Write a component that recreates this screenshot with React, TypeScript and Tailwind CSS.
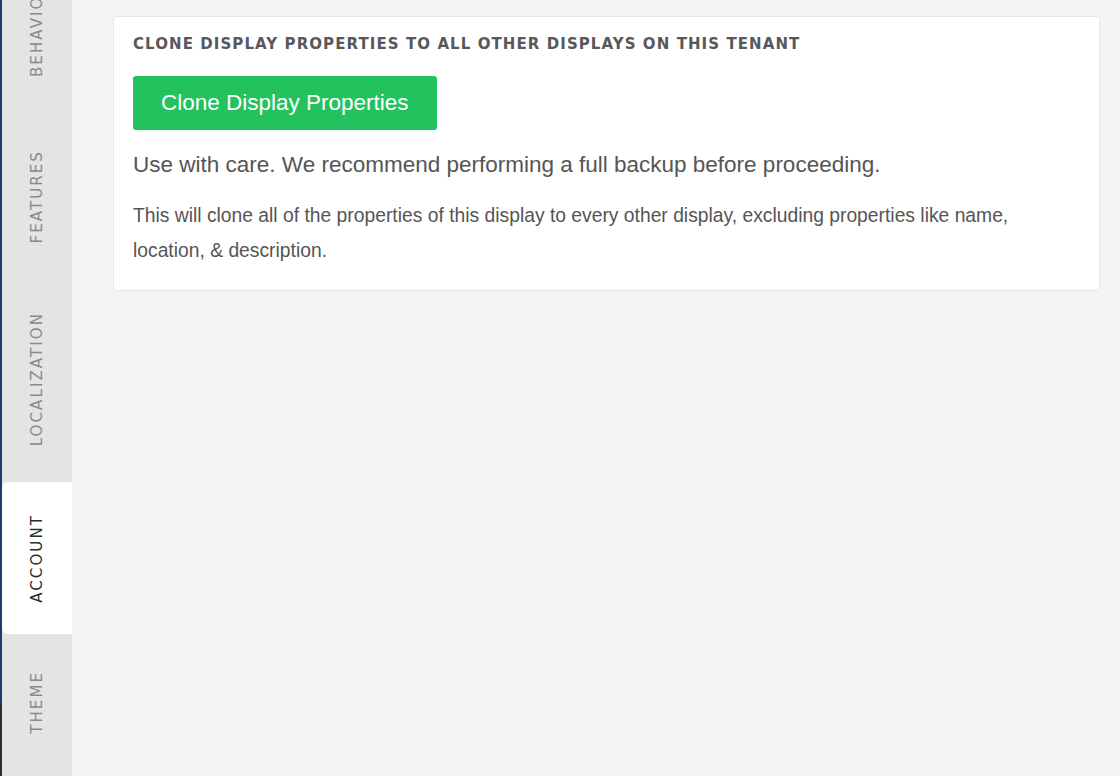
import React from "react";

const tabs = [
  { label: "BEHAVIOR", h: "h-[168px]", active: false },
  { label: "FEATURES", h: "h-[158px]", active: false },
  { label: "LOCALIZATION", h: "h-[198px]", active: false },
  { label: "ACCOUNT", h: "h-[152px]", active: true },
  { label: "THEME", h: "h-[129px]", active: false },
];

export default function App() {
  return (
    <div className="flex h-[776px] w-[1120px] overflow-hidden bg-[#f3f4f6]">
      <div className="flex w-[2px] flex-col">
        <div className="h-[703px] bg-[#1f3a6b]" />
        <div className="flex-1 bg-[#2e2e2e]" />
      </div>
      <div className="w-[70px] bg-[#e4e4e4]">
        <div className="-mt-[54px] flex flex-col gap-1">
          {tabs.map((t) => (
            <div
              key={t.label}
              className={`${t.h} flex items-center justify-center ${
                t.active ? "rounded-l-[6px] bg-white text-[#2d2d2d]" : "text-[#8a8a8a]"
              }`}
            >
              <span className="rotate-180 font-['DejaVu_Sans',sans-serif] text-[15px] font-medium tracking-[0.14em] [writing-mode:vertical-rl]">
                {t.label}
              </span>
            </div>
          ))}
        </div>
      </div>
      <div className="flex-1 pl-[41px] pr-[20px] pt-[16px]">
        <div className="rounded-[3px] border border-[#e6e7ea] bg-white px-[19px] pb-[22px] pt-[17px]">
          <h2 className="font-['DejaVu_Sans',sans-serif] text-[15px] font-semibold tracking-[0.072em] text-[#58585b] leading-[20px]">
            CLONE DISPLAY PROPERTIES TO ALL OTHER DISPLAYS ON THIS TENANT
          </h2>
          <button className="mt-[22px] flex h-[54px] items-center rounded-[3px] bg-[#22c25f] px-[28px] font-['Liberation_Sans',Arial,sans-serif] text-[22.5px] text-white">
            Clone Display Properties
          </button>
          <p className="mt-[20px] font-['Liberation_Sans',Arial,sans-serif] text-[22.5px] leading-[30px] text-[#555]">
            Use with care. We recommend performing a full backup before proceeding.
          </p>
          <p className="mt-[18px] max-w-[910px] font-['Liberation_Sans',Arial,sans-serif] text-[19.3px] leading-[35px] text-[#555]">
            This will clone all of the properties of this display to every other display, excluding properties like name,
            location, &amp; description.
          </p>
        </div>
      </div>
    </div>
  );
}
